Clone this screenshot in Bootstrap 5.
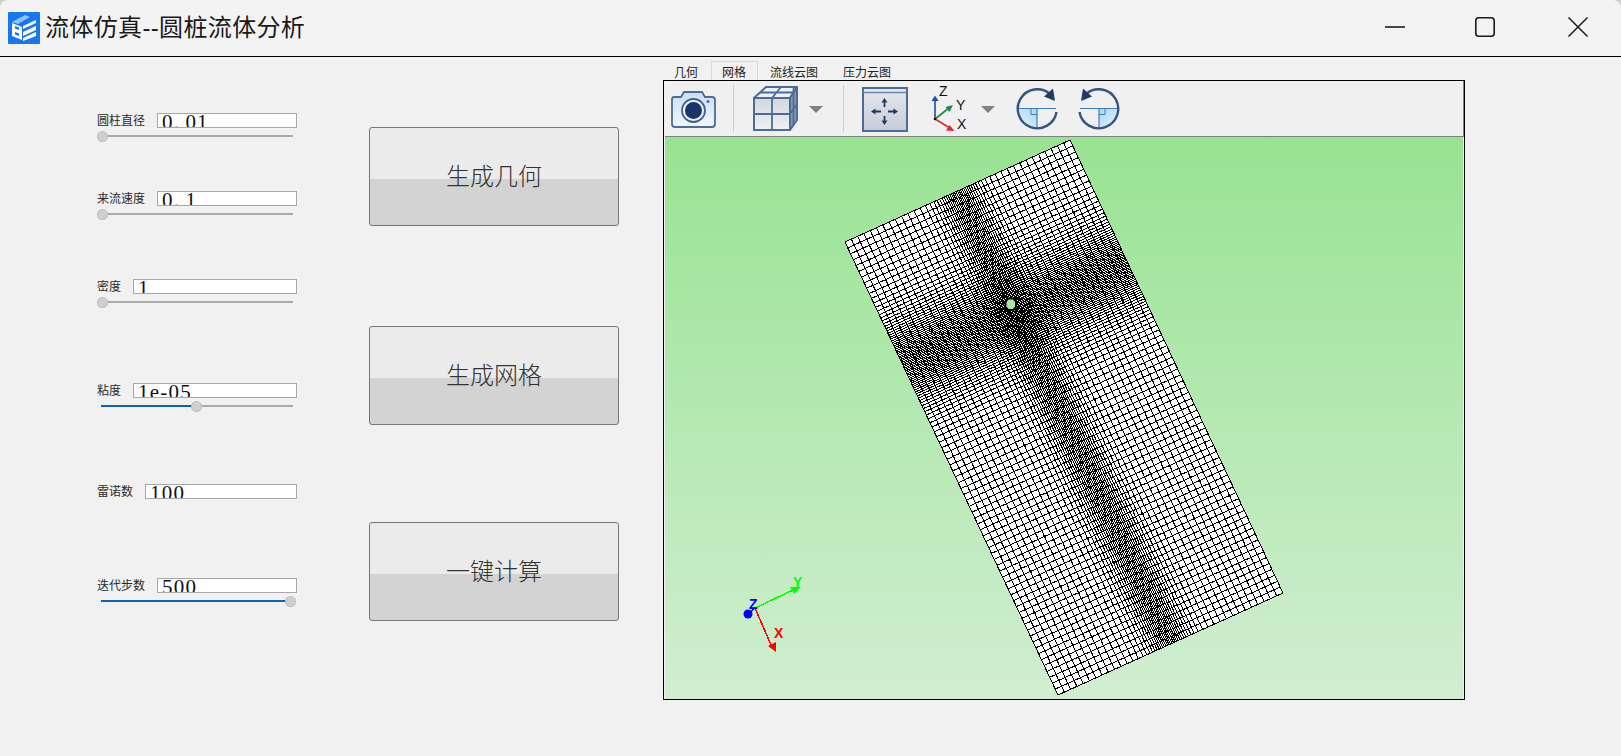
<!DOCTYPE html>
<html lang="zh-CN">
<head>
  <meta charset="UTF-8">
  <meta name="viewport" content="width=device-width, initial-scale=1.0">
  <title>流体仿真--圆桩流体分析</title>
  <link href="https://cdn.jsdelivr.net/npm/bootstrap@5.3.0/dist/css/bootstrap.min.css" rel="stylesheet">
  <style>
    html, body {
      height: 100%;
    }
    body {
      background-color: #f1f1f1;
      color: #222;
      font-family: "Liberation Sans", "Noto Sans CJK SC", sans-serif;
      overflow: hidden;
    }
    .win-head {
      background-color: #cfcfcf;
      border-bottom: 1px solid #000;
    }
    .win-bar {
      height: 56px;
      background-color: #f3f3f3;
      border-radius: 8px 8px 0 0;
      padding-left: 8px;
    }
    .win-title {
      font-size: 24px;
      line-height: 32px;
      margin-left: 5px;
      letter-spacing: 0.35px;
      color: #1a1a1a;
    }
    .win-ctl {
      margin-left: 50px;
    }
    .win-ctl-close {
      margin-left: 53px;
    }
    .win-ctls {
      padding-right: 23px;
    }

    .param-col {
      width: 200px;
      margin-left: 97px;
    }
    .param-row {
      width: 200px;
    }
    .p1 { margin-top: 56px; }
    .p2 { margin-top: 47px; }
    .p3 { margin-top: 57px; }
    .p4 { margin-top: 73px; }
    .p5 { margin-top: 70px; }
    .p6 { margin-top: 79px; }
    .param-head {
      height: 15px;
      gap: 12px;
    }
    .param-label {
      font-size: 12px;
      line-height: 17px;
      white-space: nowrap;
      color: #2a2a2a;
    }
    .num-box {
      height: 15px;
      background-color: #fff;
      border: 1px solid #a8a8a8;
      padding-left: 4px;
      overflow: hidden;
      font-family: "Liberation Serif", serif;
      font-size: 21px;
      line-height: 17px;
      letter-spacing: 1.2px;
      white-space: nowrap;
      color: #111;
    }
    .num-box .dot {
      display: inline-block;
      width: 11.7px;
    }
    .param-row .form-range {
      display: block;
      width: 199px;
      height: 16px;
      padding: 0;
    }
    .param-row .form-range::-webkit-slider-runnable-track {
      height: 2px;
      border-radius: 0;
      background: linear-gradient(to right,
        transparent 4px, #0f64b8 4px, #0f64b8 var(--p, 0px),
        #aaa var(--p, 0px), #aaa calc(100% - 3px), transparent calc(100% - 3px));
    }
    .param-row .form-range::-webkit-slider-thumb {
      width: 11px;
      height: 11px;
      margin-top: -4.5px;
      background-color: #cfcfcf;
      border: 1px dotted #aaa;
      border-radius: 50%;
    }

    .action-col {
      width: 250px;
      margin-left: 72px;
    }
    .calc-btn {
      display: block;
      width: 250px;
      height: 99px;
      padding: 0;
      border: 1px solid #777;
      border-radius: 3px;
      background: linear-gradient(to bottom, #ebebeb 52.5%, #d3d3d3 52.5%);
      color: #333;
      font-size: 24px;
      font-weight: 300;
      line-height: 1;
    }
    .a1 { margin-top: 70px; }
    .a2 { margin-top: 100px; }
    .a3 { margin-top: 97px; }

    .view-col {
      width: 802px;
      margin-left: 44px;
      margin-top: 4px;
    }
    .view-tabs {
      height: 19px;
      border-bottom: 0;
      flex-wrap: nowrap;
      margin-left: -2px;
    }
    .view-tabs .nav-item + .nav-item + .nav-item {
      margin-left: -1px;
    }
    .view-tabs .nav-link {
      height: 19px;
      margin: 0;
      padding: 3px 12px 0;
      border: 1px solid transparent;
      border-bottom: 0;
      border-radius: 0;
      background: none;
      color: #222;
      font-size: 12px;
      line-height: 16px;
      white-space: nowrap;
    }
    .view-tabs .nav-link.active {
      border-color: #d9d9d9;
      background-color: #f1f1f1;
      color: #222;
      padding-left: 10px;
      padding-right: 11px;
    }
    .view-frame {
      height: 620px;
      border: 1px solid #000;
      padding: 0 1px 0 1px;
    }
    .tool-strip {
      height: 56px;
      padding-left: 5px;
      border-bottom: 1px solid #808080;
      border-right: 1px solid #808080;
      margin-right: -1px;
      background-color: #f0f0f0;
    }
    .tool-strip svg {
      display: block;
      flex: none;
    }
    .tool-sep {
      width: 1px;
      height: 47px;
      flex: none;
      background-color: #cfcfcf;
    }
    .ml-15 { margin-left: 15px; }
    .ml-16 { margin-left: 16px; }
    .ml-17 { margin-left: 17px; }
    .ml-18 { margin-left: 18px; }
    .ml-20 { margin-left: 20px; }
    .ml-6 { margin-left: 6px; }
    .ml-8 { margin-left: 8px; }
    .render-view {
      height: 562px;
      background: linear-gradient(to bottom, #98e392, #d1eed1);
    }
    .render-view svg {
      display: block;
    }
    .axis-tag {
      font-family: "Liberation Sans", sans-serif;
      font-size: 14px;
      font-weight: 700;
    }
    .axis-tag-icon {
      font-family: "Liberation Sans", sans-serif;
      font-size: 14px;
      fill: #111;
    }
  </style>
</head>
<body>
  <!-- title bar -->
  <header class="win-head">
    <div class="win-bar d-flex align-items-center">
      <svg width="32" height="32" viewBox="0 0 32 32" class="flex-none">
        <rect width="32" height="32" rx="1" fill="#1877ee"/>
        <polygon points="4,10 17,3 22,5 10,12" fill="#8fc0f8"/>
        <polygon points="4,11 14,15 14,28 4,24" fill="#fff"/>
        <polygon points="7,14 11,15.5 11,18 7,16.5" fill="#1877ee"/>
        <polygon points="7,20 11,21.5 11,24 7,22.5" fill="#1877ee"/>
        <polygon points="15,14 28,8 28,11 15,17" fill="#fff"/>
        <polygon points="15,20 28,14 28,18 15,24" fill="#fff"/>
        <polygon points="15,26 28,20 28,24 15,29" fill="#fff"/>
      </svg>
      <span class="win-title">流体仿真--圆桩流体分析</span>
      <div class="win-ctls ms-auto d-flex align-items-center">
        <svg class="win-ctl" width="40" height="40" viewBox="0 0 40 40"><line x1="10" y1="19" x2="30" y2="19" stroke="#1a1a1a" stroke-width="1.6"/></svg>
        <svg class="win-ctl" width="40" height="40" viewBox="0 0 40 40"><rect x="10.8" y="9.8" width="18.4" height="18.4" rx="3" fill="none" stroke="#1a1a1a" stroke-width="1.6"/></svg>
        <svg class="win-ctl-close" width="40" height="40" viewBox="0 0 40 40"><path d="M10.500 9.500 L29.500 28.500 M29.500 9.500 L10.500 28.500" fill="none" stroke="#1a1a1a" stroke-width="1.5"/></svg>
      </div>
    </div>
  </header>

  <main class="d-flex align-items-start">
    <!-- parameters -->
    <section class="param-col">
      <div class="param-row p1">
        <div class="param-head d-flex"><span class="param-label">圆柱直径</span><div class="num-box flex-grow-1">0<span class="dot">.</span>01</div></div>
        <input type="range" class="form-range" min="0" max="100" value="0">
      </div>
      <div class="param-row p2">
        <div class="param-head d-flex"><span class="param-label">来流速度</span><div class="num-box flex-grow-1">0<span class="dot">.</span>1</div></div>
        <input type="range" class="form-range" min="0" max="100" value="0">
      </div>
      <div class="param-row p3">
        <div class="param-head d-flex"><span class="param-label">密度</span><div class="num-box flex-grow-1">1</div></div>
        <input type="range" class="form-range" min="0" max="100" value="0">
      </div>
      <div class="param-row p4">
        <div class="param-head d-flex"><span class="param-label">粘度</span><div class="num-box flex-grow-1">1e-05</div></div>
        <input type="range" class="form-range" min="0" max="100" value="50">
      </div>
      <div class="param-row p5">
        <div class="param-head d-flex"><span class="param-label">雷诺数</span><div class="num-box flex-grow-1">100</div></div>
      </div>
      <div class="param-row p6">
        <div class="param-head d-flex"><span class="param-label">迭代步数</span><div class="num-box flex-grow-1">500</div></div>
        <input type="range" class="form-range" min="0" max="100" value="100">
      </div>
    </section>

    <!-- actions -->
    <section class="action-col">
      <button type="button" class="btn calc-btn a1">生成几何</button>
      <button type="button" class="btn calc-btn a2">生成网格</button>
      <button type="button" class="btn calc-btn a3">一键计算</button>
    </section>

    <!-- viewer -->
    <section class="view-col">
      <ul class="nav nav-tabs view-tabs">
        <li class="nav-item"><a class="nav-link" href="#">几何</a></li>
        <li class="nav-item"><a class="nav-link active" href="#">网格</a></li>
        <li class="nav-item"><a class="nav-link" href="#">流线云图</a></li>
        <li class="nav-item"><a class="nav-link" href="#">压力云图</a></li>
      </ul>
      <div class="view-frame">
        <div class="tool-strip d-flex align-items-center">
          <!-- camera -->
          <svg width="48" height="55" viewBox="670 81 48 55">
            <defs>
              <linearGradient id="camFill" x1="0" y1="0" x2="0" y2="1"><stop offset="0" stop-color="#c9def5"/><stop offset="1" stop-color="#f1f6fc"/></linearGradient>
            </defs>
            <path d="M674 97 H681 L684 92 H702 L705 97 H712 Q715 97 715 100 V124 Q715 127 712 127 H675 Q672 127 672 124 V100 Q672 97 674 97 Z" fill="url(#camFill)" stroke="#4c6c97" stroke-width="1.8"/>
            <circle cx="693.500" cy="110.500" r="11.500" fill="#eaf2fb" stroke="#3f5f8c" stroke-width="1.8"/>
            <circle cx="693.500" cy="110.500" r="8.500" fill="#1b3468"/>
            <circle cx="708" cy="101.500" r="1.500" fill="#4c6c97"/>
          </svg>
          <div class="tool-sep ml-15"></div>
          <!-- mesh cube -->
          <svg class="ml-16" width="50" height="55" viewBox="750 81 50 55">
            <defs>
              <linearGradient id="cubeFill" x1="0" y1="0" x2="0" y2="1"><stop offset="0" stop-color="#d2d6dd"/><stop offset="1" stop-color="#f0f1f4"/></linearGradient>
            </defs>
            <polygon points="754,98 766,87 797,87 790,98" fill="#eef1f5" stroke="#4c6c97" stroke-width="2" stroke-linejoin="round"/>
            <polygon points="790,98 797,87 797,120 790,130" fill="#8a98ae" stroke="#4c6c97" stroke-width="2" stroke-linejoin="round"/>
            <rect x="754" y="98" width="36" height="32" fill="url(#cubeFill)" stroke="#4c6c97" stroke-width="2"/>
            <path d="M772 98 V130 M754 114 H790 M790 114 L797 104 M772 98 L781 87 M760 92.500 H794 M793.500 87 V125" fill="none" stroke="#4c6c97" stroke-width="1.8"/>
          </svg>
          <svg class="ml-6" width="20" height="55" viewBox="806 81 20 55"><polygon points="809,106 823,106 816,113" fill="#808080"/></svg>
          <div class="tool-sep ml-17"></div>
          <!-- fit view -->
          <svg class="ml-16" width="50" height="55" viewBox="860 81 50 55">
            <defs>
              <linearGradient id="fitFill" x1="0" y1="0" x2="0" y2="1"><stop offset="0" stop-color="#e6e8ed"/><stop offset="1" stop-color="#c6cbd6"/></linearGradient>
            </defs>
            <rect x="863" y="88" width="44" height="43" fill="url(#fitFill)" stroke="#4c6c97" stroke-width="2"/>
            <line x1="863" y1="92.500" x2="907" y2="92.500" stroke="#6d87ab" stroke-width="1.500"/>
            <path d="M881 111.500 H873 M888 111.500 H896 M884.500 107 V100 M884.500 116 V123" stroke="#1f3a66" stroke-width="1.800" fill="none"/>
            <polygon points="871,111.500 875.500,108.500 875.500,114.500" fill="#1f3a66"/>
            <polygon points="898,111.500 893.500,108.500 893.500,114.500" fill="#1f3a66"/>
            <polygon points="884.500,98 881.500,102.500 887.500,102.500" fill="#1f3a66"/>
            <polygon points="884.500,125 881.500,120.500 887.500,120.500" fill="#1f3a66"/>
          </svg>
          <!-- view axes -->
          <svg class="ml-20" width="40" height="55" viewBox="930 81 40 55">
            <line x1="935" y1="119" x2="935" y2="99" stroke="#1b4fa8" stroke-width="1.600"/>
            <polygon points="935,95.500 931.500,101 938.500,101" fill="#1b4fa8"/>
            <line x1="935" y1="119" x2="949" y2="108" stroke="#1a8a44" stroke-width="1.600"/>
            <polygon points="953,105 945.500,107 949.500,112" fill="#1a8a44"/>
            <line x1="935" y1="119" x2="950" y2="128" stroke="#e62626" stroke-width="1.600"/>
            <polygon points="954.500,131 946,130.500 949.500,125" fill="#e62626"/>
            <circle cx="935" cy="119" r="1.300" fill="#111"/>
            <text class="axis-tag-icon" x="939" y="96">Z</text>
            <text class="axis-tag-icon" x="956" y="110">Y</text>
            <text class="axis-tag-icon" x="957" y="129">X</text>
          </svg>
          <svg class="ml-8" width="20" height="55" viewBox="978 81 20 55"><polygon points="981,106 995,106 988,113" fill="#808080"/></svg>
          <!-- rotate right -->
          <svg class="ml-17" width="44" height="55" viewBox="1015 81 44 55">
            <defs>
              <linearGradient id="rotFill" x1="1" y1="0" x2="0" y2="1"><stop offset="0" stop-color="#a9d6f4"/><stop offset="1" stop-color="#e6f3fc"/></linearGradient>
            </defs>
            <path d="M1017.500 108.500 H1037 V128 A19.500 19.500 0 0 1 1017.500 108.500 Z" fill="url(#rotFill)"/>
            <path d="M1031 108.500 V114.500 H1037" fill="none" stroke="#3f7fb8" stroke-width="1"/>
            <path d="M1017.500 108.500 H1056 M1037 108.500 V128" fill="none" stroke="#3f7fb8" stroke-width="1.200"/>
            <path d="M1056.500 112 A19.500 19.500 0 1 1 1050 94" fill="none" stroke="#33547f" stroke-width="2.400"/>
            <polygon points="1055,101 1044,96.500 1053,88.500" fill="#1f3a66"/>
          </svg>
          <!-- rotate left -->
          <svg class="ml-18" width="44" height="55" viewBox="1077 81 44 55">
            <g transform="matrix(-1 0 0 1 2136 0)">
              <path d="M1017.500 108.500 H1037 V128 A19.500 19.500 0 0 1 1017.500 108.500 Z" fill="url(#rotFill)"/>
              <path d="M1031 108.500 V114.500 H1037" fill="none" stroke="#3f7fb8" stroke-width="1"/>
              <path d="M1017.500 108.500 H1056 M1037 108.500 V128" fill="none" stroke="#3f7fb8" stroke-width="1.200"/>
              <path d="M1056.500 112 A19.500 19.500 0 1 1 1050 94" fill="none" stroke="#33547f" stroke-width="2.400"/>
              <polygon points="1055,101 1044,96.500 1053,88.500" fill="#1f3a66"/>
            </g>
          </svg>
        </div>
        <div class="render-view">
          <svg id="meshView" width="798" height="562" viewBox="665 137 798 562">
            <polygon id="meshFace" fill="#fff"/>
            <path id="meshLines" fill="none" stroke="#000" stroke-width="1" shape-rendering="crispEdges"/>
            <polygon points="1005.500,301.500 1008,298.500 1013.500,298.500 1016,301.500 1016,307 1013.500,310 1008,310 1005.500,307" fill="#a8e6a2" stroke="#000" stroke-width="2"/>
            <!-- orientation axes -->
            <g shape-rendering="crispEdges">
              <line x1="755" y1="608" x2="793" y2="590" stroke="#00ff00" stroke-width="1.500"/>
              <line x1="755" y1="608" x2="771" y2="645" stroke="#ff0000" stroke-width="1.500"/>
              <line x1="755" y1="608" x2="750" y2="612" stroke="#0000ff" stroke-width="1.500"/>
            </g>
            <polygon points="801,587 790,587 794,594" fill="#00ff00"/>
            <polygon points="776,652 768,646 776,642" fill="#ff0000"/>
            <circle cx="748" cy="614" r="4.500" fill="#0000ff"/>
            <text class="axis-tag" x="749" y="609" fill="#0000ff">Z</text>
            <text class="axis-tag" x="793" y="587" fill="#00ff00">Y</text>
            <text class="axis-tag" x="774" y="638" fill="#ff0000">X</text>
          </svg>
        </div>
      </div>
    </section>
  </main>

  <script src="https://cdn.jsdelivr.net/npm/bootstrap@5.3.0/dist/js/bootstrap.bundle.min.js"></script>
  <script>
    document.querySelectorAll('.form-range').forEach((range) => {
      const fill = 5.5 + (range.value / 100) * 188;
      if (range.value > 0) range.style.setProperty('--p', fill + 'px');
    });

    // graded line positions: dense around the cylinder row/column
    function gradedLines(count, centre, width, boost) {
      const steps = 2000;
      const total = [0];
      for (let k = 1; k <= steps; k++) {
        const x = (k - 0.5) / steps;
        const d = (x - centre) / width;
        total.push(total[k - 1] + 1 + boost * Math.exp(-d * d));
      }
      const lines = [];
      let k = 0;
      for (let n = 0; n <= count; n++) {
        const target = (n / count) * total[steps];
        while (k < steps && total[k + 1] < target) k++;
        lines.push(k === steps ? 1 : (k + (target - total[k]) / (total[k + 1] - total[k])) / steps);
      }
      return lines;
    }

    const left = [845, 242], across = [225, -102], along = [213, 453];
    const ss = gradedLines(54, 0.5, 0.09, 3.2);
    const ts = gradedLines(116, 0.27, 0.09, 3.2);

    let d = '';
    const meshPoint = (s, t) => (left[0] + s * across[0] + t * along[0]).toFixed(1) + ' ' + (left[1] + s * across[1] + t * along[1]).toFixed(1);
    ss.forEach((s) => {
      d += 'M' + meshPoint(s, 0) + 'L' + meshPoint(s, 1);
    });
    ts.forEach((t) => {
      d += 'M' + meshPoint(0, t) + 'L' + meshPoint(1, t);
    });
    document.getElementById('meshLines').setAttribute('d', d);
    document.getElementById('meshFace').setAttribute('points', '845,242 1070,140 1283,593 1058,695');
  </script>
</body>
</html>
